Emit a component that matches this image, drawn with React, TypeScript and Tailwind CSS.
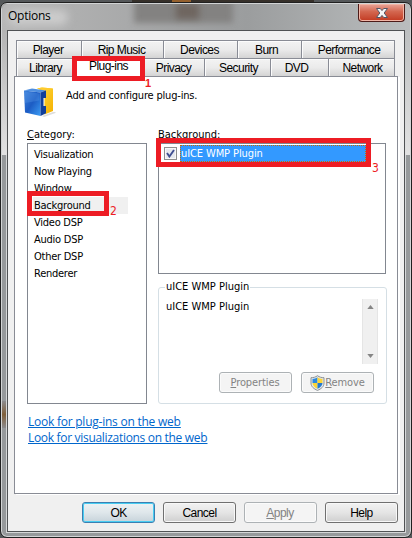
import React from 'react';
import clsx from 'clsx';

const tahoma = "font-['DejaVu_Sans_Condensed','DejaVu_Sans',sans-serif]";
const sans = "font-['Liberation_Sans',Arial,sans-serif]";

function Tab({ label, className }: { label: string; className: string }) {
  return (
    <div
      className={clsx(
        sans,
        'flex h-[18px] shrink-0 items-center justify-center border-t border-r border-[#898c95] bg-linear-to-b from-[#f3f3f3] via-[#ebebeb] via-50% to-[#d4d4d4] pt-px text-[12px] tracking-[-0.55px] shadow-[inset_1px_1px_0_#fcfcfc]',
        className,
      )}
    >
      {label}
    </div>
  );
}

function Button({ children, kind }: { children: React.ReactNode; kind: 'default' | 'normal' | 'disabled' }) {
  return (
    <button
      className={clsx(
        'flex h-[21px] w-[73px] shrink-0 items-center justify-center rounded-[3px] border whitespace-nowrap',
        kind === 'default' &&
          'border-[#3c7fb1] bg-linear-to-b from-[#eef2f4] via-[#dfe7eb] via-50% to-[#c7d3da] shadow-[inset_0_0_0_1px_#48cdf2]',
        kind === 'normal' &&
          'border-[#707070] bg-linear-to-b from-[#f2f2f2] via-[#e5e5e5] via-50% to-[#cfcfcf] shadow-[inset_0_0_0_1px_#f8f8f8]',
        kind === 'disabled' && 'border-[#adb2b5] bg-[#f4f4f4] text-[#838383] shadow-[inset_0_0_0_1px_#fbfbfb]',
      )}
    >
      {children}
    </button>
  );
}

function PluginIcon() {
  return (
    <svg className="mt-[10px] ml-[8px] h-[32px] w-[34px]" viewBox="0 0 34 32">
      <defs>
        <linearGradient id="front" x1="0" y1="0" x2="1" y2="1">
          <stop offset="0" stopColor="#3f83dc" />
          <stop offset=".5" stopColor="#1c5cc4" />
          <stop offset="1" stopColor="#3c9cf4" />
        </linearGradient>
        <linearGradient id="gold" x1="0" y1="0" x2="1" y2="1">
          <stop offset="0" stopColor="#ffdc42" />
          <stop offset="1" stopColor="#f5b000" />
        </linearGradient>
      </defs>
      <path d="M19 29l11-4h2.500v1L21 30z" fill="#ddd" />
      <path d="M14 1.500l5-1 11 1V24l-8.500 3.500V5z" fill="url(#gold)" />
      <path d="M14 1.500l5-1 11 1-7.500 2.800z" fill="#ffcb2e" />
      <path d="M1 3.500l8-2 14 2-5.500 2z" fill="#4e8fe0" />
      <path d="M1 3.500l16.500 2V29L2 25.500z" fill="url(#front)" />
      <path d="M17.500 5.500L23 3.500V11h-2.500v8H23v7.300L17.500 29z" fill="#123f9a" />
      <path d="M2 4.700l14.500 1.800v7L2 16z" fill="#69a8ef" opacity=".25" />
    </svg>
  );
}

function Shield() {
  return (
    <svg className="h-4 w-[15px] shrink-0" viewBox="0 0 15 16">
      <path d="M7.5 .7C5.5 2.2 3.5 2.7 1 2.7V8c0 3.6 2.7 5.8 6.5 7.4C11.3 13.8 14 11.6 14 8V2.7c-2.5 0-4.500-.5-6.5-2z" fill="#e5e9ec" stroke="#8c9195" />
      <path d="M7.500 2.300C5.800 3.500 4.300 3.900 2.500 4v4h5z" fill="#2b8ae0" />
      <path d="M7.500 2.300c1.700 1.200 3.200 1.600 5 1.700v4h-5z" fill="#fcd535" />
      <path d="M2.500 8h5v5.800C4.500 12.400 2.600 10.500 2.500 8z" fill="#fcd535" />
      <path d="M12.500 8h-5v5.800c3-1.400 4.900-3.300 5-5.800z" fill="#2479cf" />
    </svg>
  );
}

const categories = ['Visualization', 'Now Playing', 'Window', 'Background', 'Video DSP', 'Audio DSP', 'Other DSP', 'Renderer'];

export default function App() {
  return (
    <div className="relative h-[538px] w-[412px] overflow-hidden bg-[#55585a]">
      <div className="absolute top-0 left-[132px] h-[2px] w-[182px] bg-[#36302a]" />
      <div className="absolute top-0 left-[172px] h-[2px] w-[19px] bg-[#95602d]" />
      <div
        className={clsx(
          tahoma,
          'absolute top-[2px] left-0 flex h-[536px] w-[412px] flex-col overflow-hidden rounded-[7px] border border-[#202020] bg-[#96999b] text-[11px] leading-[16px] text-black shadow-[inset_0_0_0_1px_#d2d4d5]',
        )}
      >
        <div className="absolute top-[1px] left-[1px] h-[151px] w-[5px] bg-linear-to-b from-[#aaa] to-[#e2e2e2]" />
        <div className="absolute top-[1px] right-[1px] h-[151px] w-[5px] bg-linear-to-b from-[#b5b8b9] to-[#e2e2e2]" />
        <div className="absolute top-[398px] left-[1px] h-[27px] w-[4px] bg-linear-to-b from-[#8b8b8e] via-[#80603a] to-[#8b8b8e]" />
        <header className="relative mx-px mt-px flex h-[26px] shrink-0 justify-between overflow-hidden rounded-t-[6px] bg-linear-to-r from-[#b7b7b7] via-[#9b9d9e] via-60% to-[#babdbe]">
          <div className="absolute -top-1 left-[132px] h-[23px] w-[99px] bg-[#838281] blur-[3px]" />
          <div className="absolute top-0 left-[174px] h-[15px] w-[23px] bg-[#6f6660] blur-[3px]" />
          <div className="absolute top-[6px] left-[6px] h-[15px] w-[60px] rounded-full bg-[#ccc] blur-[4px]" />
          <h1 className="relative ml-[6px] pt-[4px] font-['Open_Sans','Noto_Sans',sans-serif] text-[12px] tracking-[-0.25px]">Options</h1>
          <button className="relative mr-[5px] flex h-[18px] w-[47px] items-center justify-center rounded-b-[4px] border border-t-0 border-[#4d1b18] bg-linear-to-b from-[#e9a599] via-[#d3664f] via-45% to-[#c2381f] shadow-[inset_0_0_0_1px_#f1b5a6]">
            <svg className="h-[12px] w-[14px]" viewBox="0 0 14 12">
              <path d="M1.500 1.500h3.800L7 3.600l1.700-2.100h3.800L9.200 6l3.300 4.500H8.700L7 8.400l-1.700 2.100H1.500L4.800 6z" fill="#f5f5f5" stroke="#535666" />
            </svg>
          </button>
        </header>

        <main className="mx-[6px] flex h-[502px] shrink-0 flex-col border border-[#505254] bg-[#f0f0f0] shadow-[0_0_0_1px_#d5d7d8]">
          <div className="ml-[8px] flex pt-[9px]">
            <Tab label="Player" className="w-[66px] border-l pr-[2px]" />
            <Tab label="Rip Music" className="w-[82px] pr-[2px]" />
            <Tab label="Devices" className="w-[74px] pr-[2px]" />
            <Tab label="Burn" className="w-[64px] pr-[6px]" />
            <Tab label="Performance" className="w-[93px] pl-[2px]" />
          </div>
          <div className="relative ml-[8px] flex">
            <Tab label="Library" className="w-[59px] border-l" />
            <div className={clsx(sans, 'z-10 flex h-[19px] w-[66px] shrink-0 items-center justify-center bg-white pl-px pb-[4px] text-[12px] tracking-[-0.55px]')}>
              Plug-ins
            </div>
            <Tab label="Privacy" className="w-[64px] pl-[2px]" />
            <Tab label="Security" className="w-[66px] pl-[2px]" />
            <Tab label="DVD" className="w-[58px] pr-[6px]" />
            <Tab label="Network" className="w-[66px] pl-[2px]" />
            <div className="absolute -top-[2px] left-[56px] z-20 h-[25px] w-[73px] border-[5px] border-[#ed1c24]" />
            <span className={clsx(sans, 'absolute top-[20px] left-[129px] z-20 text-[11px] leading-[10px] font-bold text-[#ed1c24]')}>1</span>
          </div>

          <section className="-mt-px ml-[6px] flex h-[418px] w-[384px] shrink-0 flex-col border border-[#898c95] bg-white shadow-[2px_1px_0_#fff]">
            <div className="flex h-[50px] shrink-0">
              <PluginIcon />
              <p className="mt-[12px] ml-[9px] leading-[14px] tracking-[-0.18px]">Add and configure plug-ins.</p>
            </div>

            <div className="ml-[12px] flex h-[278px] shrink-0 gap-[11px]">
              <div className="flex w-[120px] flex-col">
                <label className="h-[17px] leading-[16px]"><u>C</u>ategory:</label>
                <div className="relative mt-[-1px] h-[261px] border border-[#828790] pt-[2px]">
                  {categories.map((name) => (
                    <div key={name} className={clsx('ml-[5px] h-[17px] w-[95px] pl-[1px] leading-[17px] tracking-[-0.25px]', name === 'Background' && 'bg-[#f0f0f0]')}>
                      {name}
                    </div>
                  ))}
                  <div className="absolute top-[47px] -left-[1px] h-[25px] w-[82px] border-[5px] border-[#ed1c24]" />
                  <span className="absolute top-[59px] left-[82px] text-[12px] text-[#ed1c24]">2</span>
                </div>
              </div>

              <div className="flex w-[229px] flex-col">
                <label className="h-[17px] leading-[16px]">Background:</label>
                <div className="relative mt-[-1px] h-[131px] w-[228px] shrink-0 border border-[#828790]">
                  <div className="mt-[1px] ml-[5px] flex h-[17px] items-center">
                    <div className="flex h-[13px] w-[13px] items-center justify-center border border-[#8e8f8f] bg-[#e6e9ee] shadow-[inset_0_0_0_1px_#f8f8f8]">
                      <svg className="h-[9px] w-[9px]" viewBox="0 0 9 9">
                        <path d="M1 4l2.400 3.500L8 1" fill="none" stroke="#3f4e91" strokeWidth="1.900" />
                      </svg>
                    </div>
                    <div className="ml-[3px] h-[17px] w-[186px] border border-dotted border-[#cc6600] bg-[#3399ff] leading-[15px] tracking-[-0.1px] text-white">uICE WMP Plugin</div>
                  </div>
                  <div className="absolute -top-[6px] -left-[3px] h-[29px] w-[215px] border-[5px] border-[#ed1c24]" />
                  <span className="absolute top-[16px] left-[213px] text-[12px] text-[#ed1c24]">3</span>
                </div>

                <fieldset className="relative mt-[13px] h-[117px] shrink-0 rounded-[3px] border border-[#d5dfe5]">
                  <span className="absolute -top-[9px] left-[6px] bg-white px-[1px]">uICE WMP Plugin</span>
                  <div className="ml-[7px] flex h-[84px] justify-between pt-[11px]">
                    <span>uICE WMP Plugin</span>
                    <div className="mr-[8px] flex h-[65px] w-[16px] flex-col items-center justify-between border-x border-[#e5e5e5] bg-[#f0f0f0] py-[6px]">
                      <svg className="h-[4px] w-[7px]" viewBox="0 0 8 5"><path d="M4 0l4 5H0z" fill="#858585" /></svg>
                      <svg className="h-[4px] w-[7px]" viewBox="0 0 8 5"><path d="M4 5L0 0h8z" fill="#858585" /></svg>
                    </div>
                  </div>
                  <div className="ml-[60px] flex gap-[9px]">
                    <Button kind="disabled"><span className="-ml-px pt-px tracking-[-0.1px]"><u>P</u>roperties</span></Button>
                    <Button kind="disabled"><Shield /><span className="pt-px tracking-[-0.1px]"><u>R</u>emove</span></Button>
                  </div>
                </fieldset>
              </div>
            </div>

            <div className="mt-[9px] ml-[13px] flex flex-col items-start font-['Open_Sans','Noto_Sans',sans-serif] text-[12px] text-[#0066cc] underline">
              <a className="tracking-[-0.24px]">Look for plug-ins on the web</a>
              <a className="tracking-[-0.31px]">Look for visualizations on the web</a>
            </div>
          </section>

          <footer className={clsx(sans, 'mt-[8px] ml-[74px] flex gap-[8px] text-[12px] tracking-[-0.55px]')}>
            <Button kind="default">OK</Button>
            <Button kind="normal">Cancel</Button>
            <Button kind="disabled"><span className="-ml-px"><u>A</u>pply</span></Button>
            <Button kind="normal">Help</Button>
          </footer>
        </main>
      </div>
    </div>
  );
}
